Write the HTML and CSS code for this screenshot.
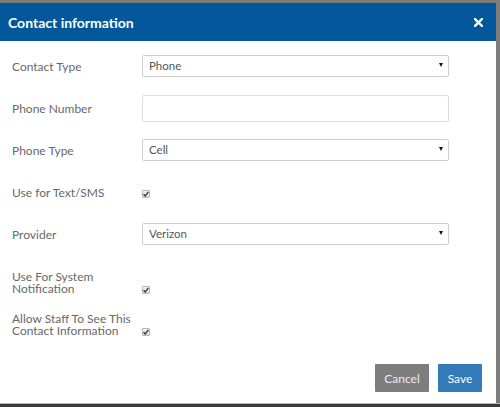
FILE: index.html
```html
<!DOCTYPE html>
<html lang="en">
<head>
<meta charset="UTF-8">
<title>Contact information</title>
<link rel="stylesheet" href="styles.css">
</head>
<body>

<div class="modal">
    <div class="modal-header">
        <h3>Contact information</h3>
        <span class="close">
            <svg width="9" height="9" viewBox="0 0 9 9"><path d="M1 1L8 8M8 1L1 8" stroke="#fff" stroke-width="2.4" stroke-linecap="square"/></svg>
        </span>
    </div>

    <div class="modal-body">
        <div class="field">
            <label>Contact Type</label>
            <div class="select-wrap">
                <select><option>Phone</option></select>
            </div>
        </div>
        <div class="field">
            <label>Phone Number</label>
            <input type="text" class="text-input">
        </div>
        <div class="field">
            <label>Phone Type</label>
            <div class="select-wrap">
                <select><option>Cell</option></select>
            </div>
        </div>
        <div class="field">
            <div class="check-group">
                <label>Use for Text/SMS</label>
                <span class="check"><svg width="6" height="6" viewBox="0 0 6 6"><path d="M0.6 3.3L2.2 4.9L5.4 0.8" stroke="#333" stroke-width="1.3" fill="none"/></svg></span>
            </div>
        </div>
        <div class="field">
            <label>Provider</label>
            <div class="select-wrap">
                <select><option>Verizon</option></select>
            </div>
        </div>
        <div class="field">
            <div class="check-group">
                <label>Use For System<br>Notification</label>
                <span class="check"><svg width="6" height="6" viewBox="0 0 6 6"><path d="M0.6 3.3L2.2 4.9L5.4 0.8" stroke="#333" stroke-width="1.3" fill="none"/></svg></span>
            </div>
        </div>
        <div class="field">
            <div class="check-group">
                <label>Allow Staff To See This<br>Contact Information</label>
                <span class="check"><svg width="6" height="6" viewBox="0 0 6 6"><path d="M0.6 3.3L2.2 4.9L5.4 0.8" stroke="#333" stroke-width="1.3" fill="none"/></svg></span>
            </div>
        </div>
    </div>

    <div class="modal-footer">
        <button class="btn btn-cancel">Cancel</button>
        <button class="btn btn-save">Save</button>
    </div>
</div>
<div class="backdrop-bottom"></div>

</body>
</html>
```

FILE: styles.css
```css
html, body {
    margin: 0;
    height: 100%;
}

body {
    font-family: Lato, 'Liberation Sans', sans-serif;
    background: #7c7c7c;
    padding-top: 3px;
    box-sizing: border-box;
    overflow: hidden;
}

.modal {
    width: 496px;
    height: 400px;
    background: #fff;
    display: flex;
    flex-direction: column;
}

.modal-header {
    height: 38px;
    background: #03579a;
    display: flex;
    align-items: center;
    justify-content: space-between;
    padding: 0 13px 0 8px;
}

.modal-header h3 {
    margin: 0;
    color: #fff;
    font-size: 14px;
    font-weight: bold;
}

.close {
    display: flex;
    margin-top: 1px;
}

.modal-body {
    padding: 13px 0 0 12px;
}

.field {
    display: flex;
    align-items: flex-start;
    height: 42px;
}

.field label {
    width: 130px;
    padding-top: 7px;
    line-height: 12px;
    font-size: 12px;
    color: #686868;
}

/* checkbox sits on the last line of its label */
.check-group {
    display: flex;
    align-items: last baseline;
}

.select-wrap {
    position: relative;
    width: 307px;
}

.select-wrap::after {
    content: "";
    position: absolute;
    right: 6px;
    top: 9px;
    border-left: 2.5px solid transparent;
    border-right: 2.5px solid transparent;
    border-top: 4px solid #111;
}

select {
    appearance: none;
    width: 100%;
    height: 22px;
    margin: 0;
    padding: 0 6px;
    border: 1px solid #cdcdcd;
    border-radius: 2px;
    background: #fff;
    font-family: Lato, 'Liberation Sans', sans-serif;
    font-size: 11.5px;
    color: #555;
}

.text-input {
    width: 307px;
    height: 27px;
    margin: -1px 0 0 0;
    box-sizing: border-box;
    border: 1px solid #dcdcdc;
    border-radius: 2px;
}

.check {
    width: 8px;
    height: 8px;
    box-sizing: border-box;
    border: 1px solid #b5b5b5;
    border-radius: 1px;
    background: linear-gradient(#f4f4f4, #dedede);
    display: flex;
    align-items: center;
    justify-content: center;
    margin-bottom: 3px;
}

.modal-footer {
    margin-top: auto;
    display: flex;
    justify-content: flex-end;
    gap: 9px;
    padding: 0 14px 11px 0;
}

.btn {
    height: 28px;
    border: none;
    border-radius: 1px;
    font-family: Lato, 'Liberation Sans', sans-serif;
    font-size: 12px;
    padding: 0;
}

.btn-cancel {
    width: 54px;
    background: #7d7d7d;
    color: #ececec;
}

.btn-save {
    width: 44px;
    background: #3479b8;
    color: #fff;
}

.backdrop-bottom {
    height: 4px;
    border-top: 1px solid #b9b9b9;
    background: #3a3a3a;
}
```
